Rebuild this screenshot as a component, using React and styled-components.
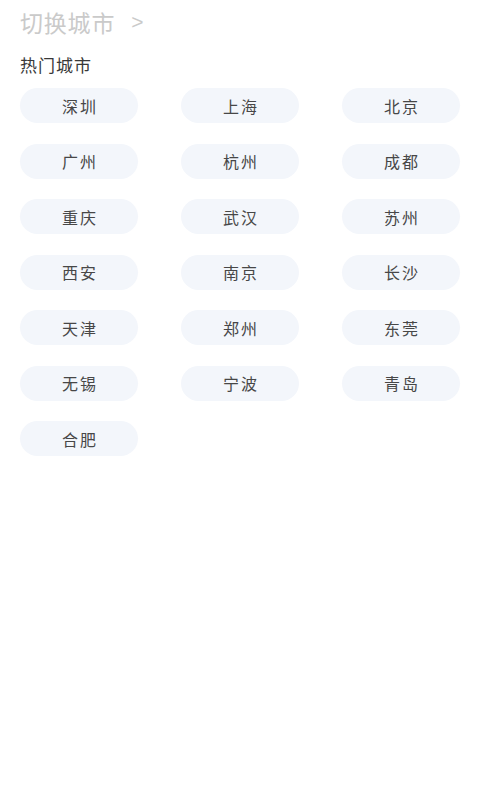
import React from "react";
import styled, { createGlobalStyle } from "styled-components";

const Global = createGlobalStyle`
  html, body { margin: 0; padding: 0; background: #ffffff; }
  body { font-family: "Noto Sans CJK SC", "Noto Sans", sans-serif; }
`;

const Page = styled.div`
  width: 480px;
  min-height: 800px;
  box-sizing: border-box;
  padding: 6px 20px 0 20px;
  background: #ffffff;
`;

const Title = styled.div`
  display: flex;
  align-items: center;
  gap: 16px;
  height: 32px;
  font-size: 23px;
  line-height: 32px;
  color: #cacaca;
  letter-spacing: 0.8px;
`;

const Arrow = styled.span`
  font-family: "Liberation Sans", sans-serif;
  font-size: 21px;
  color: #cacaca;
`;

const Heading = styled.div`
  margin-top: 15px;
  font-size: 17px;
  line-height: 24px;
  color: #383838;
  letter-spacing: 1px;
`;

const Grid = styled.div`
  margin-top: 11px;
  display: grid;
  grid-template-columns: repeat(3, 118px);
  justify-content: space-between;
  row-gap: 20.5px;
`;

const Pill = styled.div`
  height: 35px;
  border-radius: 18px;
  background: #f3f6fb;
  display: flex;
  align-items: center;
  justify-content: center;
  font-size: 16px;
  color: #474747;
  letter-spacing: 2px;
  padding-left: 2px;
`;

const cities = [
  "深圳", "上海", "北京",
  "广州", "杭州", "成都",
  "重庆", "武汉", "苏州",
  "西安", "南京", "长沙",
  "天津", "郑州", "东莞",
  "无锡", "宁波", "青岛",
  "合肥",
];

export default function App() {
  return (
    <>
      <Global />
      <Page>
        <Title>
          <span>切换城市</span>
          <Arrow>&gt;</Arrow>
        </Title>
        <Heading>热门城市</Heading>
        <Grid>
          {cities.map((c) => (
            <Pill key={c}>{c}</Pill>
          ))}
        </Grid>
      </Page>
    </>
  );
}
